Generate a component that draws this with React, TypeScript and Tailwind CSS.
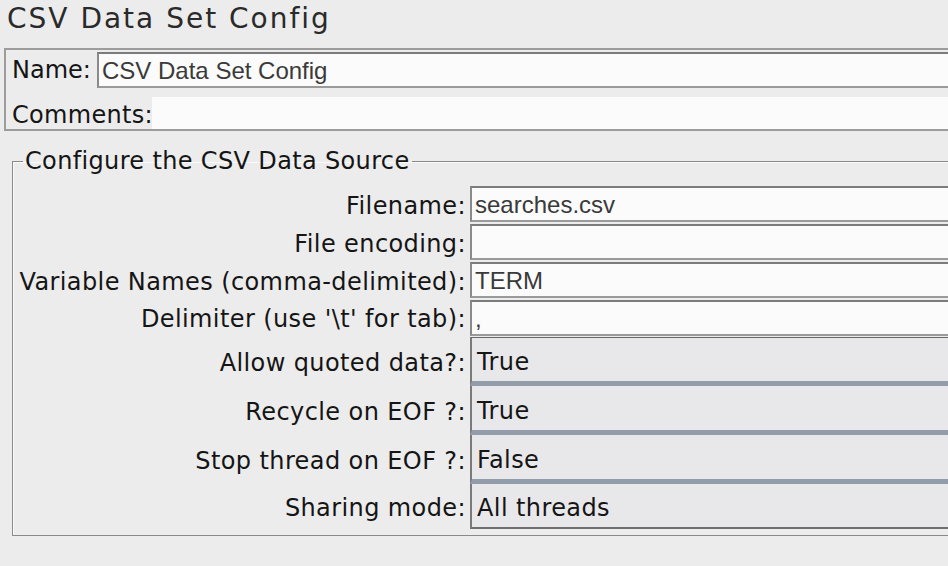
import React from "react";

const TextField = ({ value }: { value: string }) => (
  <div className="flex items-center h-[36px] bg-[#fbfbfb] border-t-2 border-l-2 border-b-2 border-t-[#7c7c7c] border-l-[#8a8a8a] border-b-[#9a9a9a] pl-[3px] font-['Liberation_Sans'] text-[24px] text-[#3a3a3a]">
    <span className="leading-none pt-[2px]">{value}</span>
  </div>
);

const Combo = ({ value, first = false, last = false }: { value: string; first?: boolean; last?: boolean }) => (
  <div
    className={`flex items-center bg-[#e8e8ea] border-l-2 border-l-[#7a7a7a] pl-[5px] text-[24px] tracking-[0.4px] text-[#151515] ${
      first ? "border-t border-t-[#666]" : ""
    } ${last ? "h-[45px] border-b-2 border-b-[#6f6f6f]" : "h-[49px] border-b-[5px] border-b-[#939cab]"}`}
  >
    <span className="leading-none pt-[5px]">{value}</span>
  </div>
);

const Label = ({ text, combo = false }: { text: string; combo?: boolean }) => (
  <div
    className={`flex items-center justify-end text-[24px] tracking-[0.4px] text-[#151515] leading-none whitespace-nowrap ${
      combo ? "pt-[3px]" : "pt-[1px]"
    }`}
  >
    {text}
  </div>
);

export default function App() {
  return (
    <div className="w-[948px] h-[566px] overflow-hidden bg-[#ececec] font-['DejaVu_Sans',sans-serif]">
      <div className="w-[1000px]">
        <div className="h-[48px] pl-[7px] text-[28px] leading-[38px] tracking-[2px] text-[#2a2a2a]">CSV Data Set Config</div>

        <div className="ml-[4px] border-t-2 border-l-2 border-b-2 border-[#9c9c9c] bg-[#ececec]">
          <div className="flex items-stretch pt-[2px]">
            <div className="w-[91px] pl-[6px] flex items-center text-[24px] text-[#151515] leading-none">Name:</div>
            <div className="flex-1">
              <TextField value="CSV Data Set Config" />
            </div>
          </div>
          <div className="flex items-stretch mt-[9px] h-[32px]">
            <div className="w-[146px] pl-[6px] flex items-center text-[24px] tracking-[0.3px] text-[#151515] leading-none pt-[3px]">Comments:</div>
            <div className="flex-1 bg-[#fbfbfb]" />
          </div>
        </div>

        <fieldset className="ml-[12px] mt-[15px] border border-[#8a8a8a] shadow-[inset_1px_1px_0_#fafafa] pb-[6px]">
          <legend className="ml-[10px] px-[2px] text-[24px] tracking-[0.35px] leading-[30px] text-[#151515]">Configure the CSV Data Source</legend>
          <div className="mt-[10px] grid grid-cols-[453px_1fr] gap-x-[4px]">
            <Label text="Filename:" />
            <div className="pb-[2px]"><TextField value="searches.csv" /></div>
            <Label text="File encoding:" />
            <div className="pb-[2px]"><TextField value="" /></div>
            <Label text="Variable Names (comma-delimited):" />
            <div className="pb-[2px]"><TextField value="TERM" /></div>
            <Label text="Delimiter (use '\t' for tab):" />
            <div className="pb-[1px]"><TextField value="," /></div>
            <Label text="Allow quoted data?:" combo />
            <Combo value="True" first />
            <Label text="Recycle on EOF ?:" combo />
            <Combo value="True" />
            <Label text="Stop thread on EOF ?:" combo />
            <Combo value="False" />
            <Label text="Sharing mode:" combo />
            <Combo value="All threads" last />
          </div>
        </fieldset>
      </div>
    </div>
  );
}
